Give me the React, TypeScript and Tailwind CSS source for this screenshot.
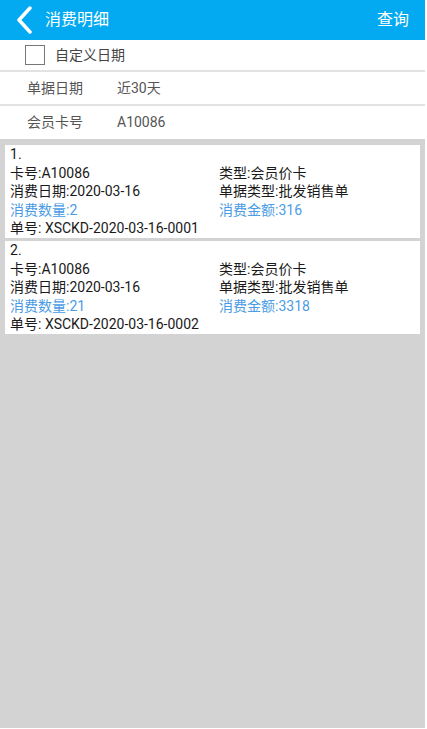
import React from 'react'

const records = [
    { no: 1, card: 'A10086', type: '会员价卡', date: '2020-03-16', billType: '批发销售单', qty: '2', amount: '316', bill: 'XSCKD-2020-03-16-0001' },
    { no: 2, card: 'A10086', type: '会员价卡', date: '2020-03-16', billType: '批发销售单', qty: '21', amount: '3318', bill: 'XSCKD-2020-03-16-0002' },
]

const RecordCard = ({ r }: any) => {
    return (
        <div className="bg-white mx-[5px] pl-[5px] text-[14px] leading-[18.6px] text-[#1a1a1a]">
            <div>{r.no}.</div>
            <div className="grid grid-cols-[209px_1fr]">
                <div>卡号:{r.card}</div>
                <div>类型:{r.type}</div>
                <div>消费日期:{r.date}</div>
                <div>单据类型:{r.billType}</div>
                <div className="text-[#4a9be6]">消费数量:{r.qty}</div>
                <div className="text-[#4a9be6]">消费金额:{r.amount}</div>
            </div>
            <div>单号: {r.bill}</div>
        </div>
    )
}

export default function App() {
    return (
        <div className="w-[427px] h-[729px] bg-white font-['Roboto','Noto_Sans_CJK_SC',sans-serif]">
            <div className="w-[425px] h-[728px] flex flex-col bg-[#d3d3d3]">
                {/* Header */}
                <div className="h-[40px] bg-[#03a9f1] flex items-center justify-between text-white shrink-0">
                    <div className="flex items-center">
                        <svg width="18" height="28" viewBox="0 0 18 28" className="ml-[15px]">
                            <path d="M15 2 L4 14 L15 26" fill="none" stroke="white" strokeWidth="3.5" strokeLinecap="round" strokeLinejoin="round" />
                        </svg>
                        <span className="ml-[12px] text-[16px]">消费明细</span>
                    </div>
                    <span className="mr-[16px] text-[16px]">查询</span>
                </div>

                {/* Filters */}
                <div className="bg-white">
                    <div className="h-[32px] flex items-center border-b-2 border-[#e2e2e2]">
                        <div className="ml-[25px] w-[20px] h-[20px] border-[1.5px] border-[#777] bg-white"></div>
                        <span className="ml-[10px] text-[14px] text-[#444]">自定义日期</span>
                    </div>
                    <div className="h-[34px] flex items-center border-b-2 border-[#e2e2e2] text-[14px] text-[#555]">
                        <span className="ml-[27px] w-[90px]">单据日期</span>
                        <span>近30天</span>
                    </div>
                    <div className="h-[33px] flex items-center text-[14px] text-[#555]">
                        <span className="ml-[27px] w-[90px]">会员卡号</span>
                        <span>A10086</span>
                    </div>
                </div>

                {/* List */}
                <div className="pt-[6px] flex flex-col gap-[3px]">
                    {records.map((r) => (
                        <RecordCard key={r.no} r={r} />
                    ))}
                </div>
            </div>
        </div>
    )
}
